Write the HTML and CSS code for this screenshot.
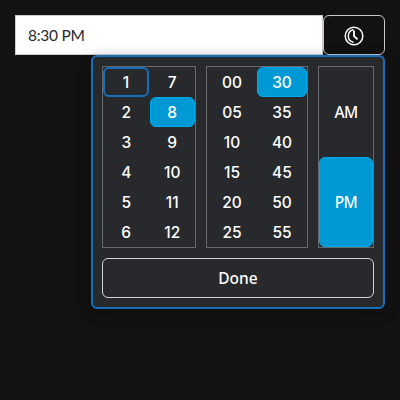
FILE: index.html
```
<!DOCTYPE html>
<html lang="en">
<head>
<meta charset="utf-8">
<title>Time picker</title>
<link rel="stylesheet" href="styles.css">
</head>
<body>
<div class="picker">
  <div class="field">
    <div class="value">8:30 PM</div>
    <div class="toggle">
      <svg class="clock" viewBox="0 0 20 20" fill="none" stroke="currentColor">
        <circle cx="10" cy="10" r="8.8" stroke-width="1.5"/>
        <path d="M9.5 3.8A6.3 6.3 0 0 0 9.5 16.2" stroke-width="1.4"/>
        <path d="M10 4.5V10.2L13.6 13.4" stroke-width="1.8"/>
      </svg>
    </div>
  </div>
  <div class="panel">
    <div class="lists">
      <div class="list hours">
        <span class="focused">1</span><span>2</span><span>3</span><span>4</span><span>5</span><span>6</span>
        <span>7</span><span class="selected">8</span><span>9</span><span>10</span><span>11</span><span>12</span>
      </div>
      <div class="list minutes">
        <span>00</span><span>05</span><span>10</span><span>15</span><span>20</span><span>25</span>
        <span class="selected">30</span><span>35</span><span>40</span><span>45</span><span>50</span><span>55</span>
      </div>
      <div class="list period"><span>AM</span><span class="selected">PM</span></div>
    </div>
    <div class="done"><span class="done-label">Done</span></div>
  </div>
</div>
</body>
</html>
```
FILE: styles.css
```
* { box-sizing: border-box; }
body {
  margin: 0;
  min-height: 400px;
  background: #121212;
  color: #fff;
  font: 600 15px/24px "Noto Sans", "Open Sans", sans-serif;
}
.picker { position: relative; padding: 15px; }
.field { display: flex; height: 40px; }
.value {
  width: 308px;
  padding: 7px 12px;
  border: 1px solid #d2cdcb;
  background: #fff;
  color: #28292d;
  font: 400 15.5px/24px Lato, sans-serif;
  letter-spacing: -.25px;
}
.toggle {
  width: 62px;
  display: flex;
  align-items: center;
  justify-content: center;
  border: 1px solid #ccc8c9;
  border-radius: 6px;
}
.clock { width: 20px; height: 20px; margin-top: 2px; }
.panel {
  position: absolute;
  top: 55px;
  right: 15px;
  width: 294px;
  height: 254px;
  padding: 9px;
  border: 2px solid #176fb9;
  border-radius: 6px;
  background: #28292d;
  box-shadow: 0 3px 15px rgba(0, 0, 0, .3);
}
.lists { display: flex; gap: 10px; }
.list {
  display: grid;
  grid-auto-flow: column;
  grid-template: repeat(6, 30px) / 1fr 1fr;
  border: 1px solid #68696d;
}
.list span {
  display: flex;
  align-items: center;
  justify-content: center;
  border: 1px solid transparent;
  border-radius: 6px;
}
.hours, .minutes { font: 550 15.5px/24px Inter, sans-serif; }
.hours span, .minutes span { padding-top: 1px; }
.hours { width: 94px; grid-template-columns: 46.5px 45.5px; }
.hours .focused { width: 46px; }
.minutes { width: 102px; }
.period { width: 56px; grid-template: repeat(2, 90px) / 1fr; font-weight: 550; font-size: 15.5px; letter-spacing: -.7px; }
.list .focused { border: 2px solid #176fb9; }
.list .selected { background: #0099d3; border-color: #00a9eb; }
.done {
  display: flex;
  align-items: center;
  justify-content: center;
  height: 40px;
  margin-top: 10px;
  border: 1px solid #d7d2d3;
  border-radius: 6px;
}
.done-label { font-weight: 550; font-size: 15.5px; }
```
